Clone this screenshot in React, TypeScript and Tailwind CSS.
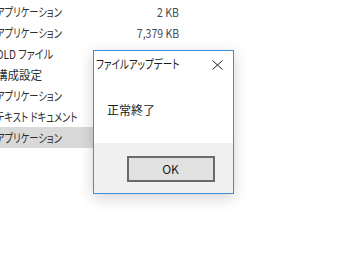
const rows = [
  { name: "アプリケーション", size: "2 KB" },
  { name: "アプリケーション", size: "7,379 KB" },
  { name: "OLD ファイル", size: "7,373 KB", sx: "scale-x-[0.84]" },
  { name: "構成設定", size: "", sx: "scale-x-[0.96]" },
  { name: "アプリケーション", size: "" },
  { name: "テキスト ドキュメント", size: "" },
  { name: "アプリケーション", size: "", selected: true },
];

const font = {
  fontFamily: '"Noto Sans CJK JP", "Noto Sans", sans-serif',
};

export default function App() {
  return (
    <div
      className="relative w-[363px] h-[270px] overflow-hidden bg-white text-[12px] [font-feature-settings:'palt']"
      style={font}
    >
      {/* File list behind the dialog */}
      <div className="flex flex-col pt-[1px]">
        {rows.map((r, i) => (
          <div
            key={i}
            className={`flex items-center h-[21px] w-[200px] ${r.selected ? "bg-[#d9d9d9]" : ""}`}
          >
            <span className="w-[104px] -ml-[4px] text-[#2e2e2e] whitespace-nowrap">
              <span className={`inline-block origin-left ${r.sx ?? "scale-x-[0.77]"}`}>{r.name}</span>
            </span>
            <span className="w-[79px] text-right text-[#4a4a4a] whitespace-nowrap">
              <span className="inline-block origin-right scale-x-[0.88]">{r.size}</span>
            </span>
          </div>
        ))}
      </div>

      {/* Message box */}
      <div className="absolute left-[93px] top-[50px] w-[141px] h-[144px] flex flex-col border border-[#3d8fd6] bg-white shadow-[0_4px_14px_rgba(0,0,0,0.18)]">
        <div className="flex items-center justify-between h-[29px] pl-[2px] pr-[10px]">
          <span className="text-[#1a1a1a] mb-[3px] inline-block origin-left scale-x-[0.79] whitespace-nowrap">
            ファイルアップデート
          </span>
          <svg width="11" height="10" viewBox="0 0 11 10" className="mb-[1px]">
            <path d="M0.5 0.5 L10.5 9.5 M10.5 0.5 L0.5 9.5" stroke="#222" strokeWidth="1" fill="none" />
          </svg>
        </div>
        <div className="h-[63px] flex items-center pl-[13px] pb-[4px] text-[#1a1a1a]">正常終了</div>
        <div className="flex-1 bg-[#f0f0f0] flex justify-center pt-[13px] pl-[14px]">
          <button className="w-[88px] h-[26px] border-2 border-[#6a6a6a] bg-[#e1e1e1] text-[#1a1a1a] text-[12px] leading-none">
            OK
          </button>
        </div>
      </div>
    </div>
  );
}
